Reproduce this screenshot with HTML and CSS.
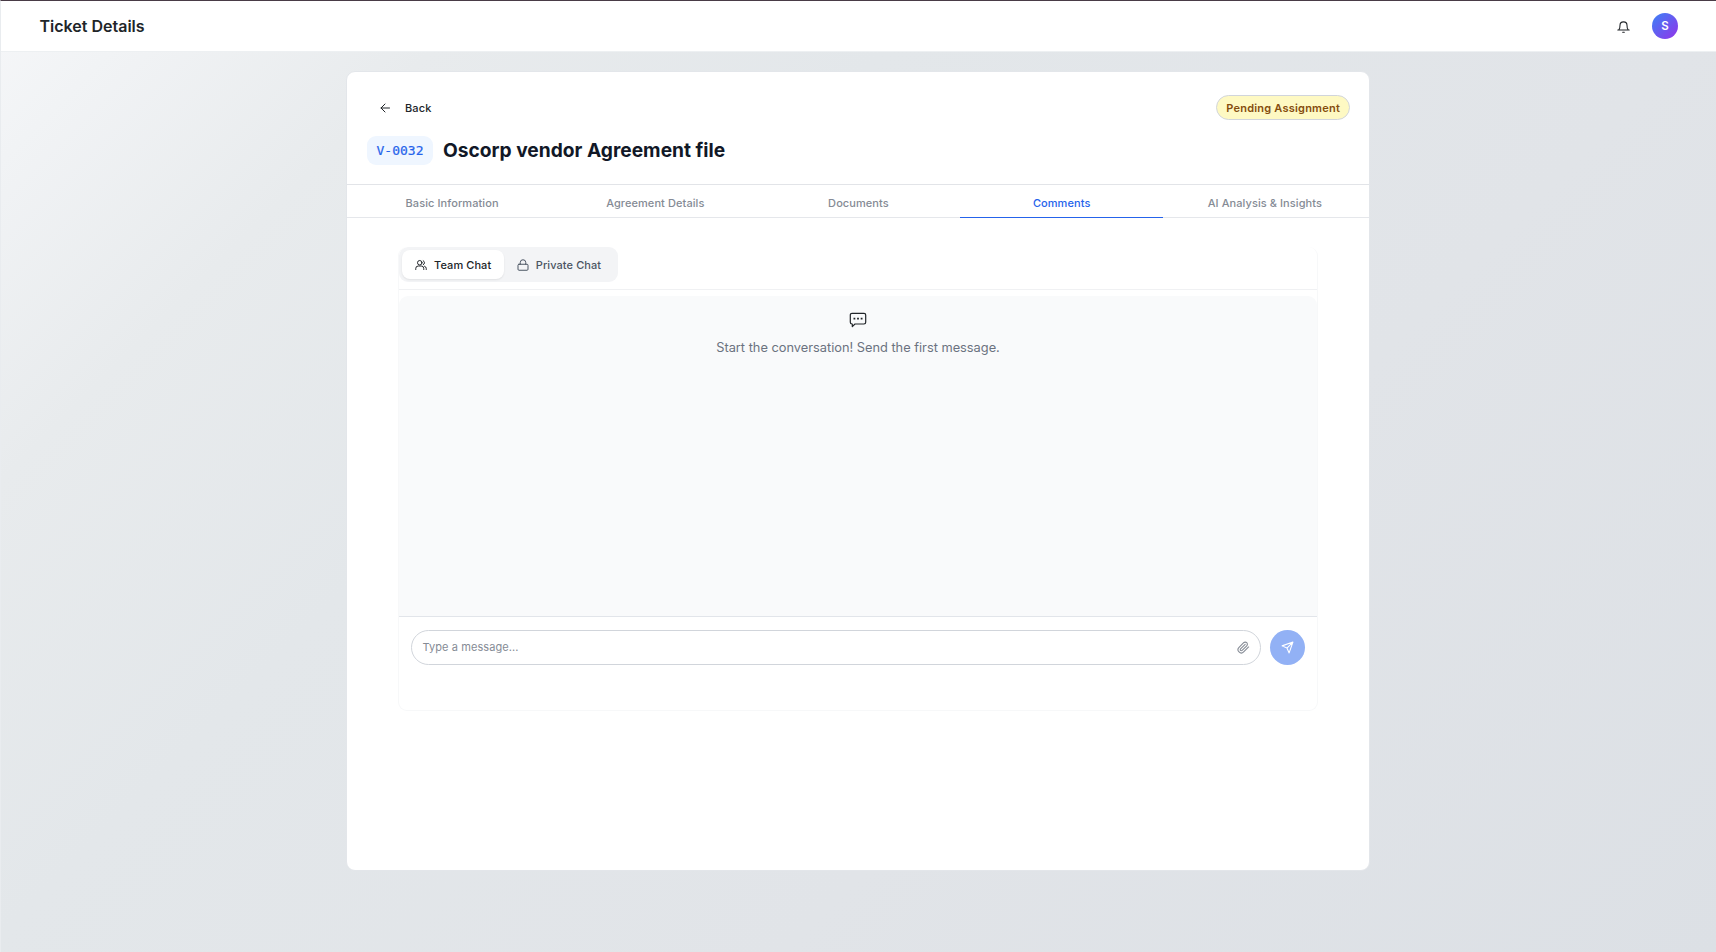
FILE: index.html
```html
<!DOCTYPE html>
<html lang="en">
<head>
<meta charset="utf-8">
<title>Ticket Details</title>
<link rel="stylesheet" href="styles.css">
</head>
<body>
<div class="app">
  <header class="topbar">
    <h1 class="page-title">Ticket Details</h1>
    <div class="actions">
      <svg class="bell" viewBox="0 0 24 24"><path d="M1.500 18.500h21M3.500 18c1.500-1.500 2-3 2-8a6.500 6.500 0 0 1 13 0c0 5 .5 6.500 2 8M10.500 22.500h3"/></svg>
      <div class="avatar">S</div>
    </div>
  </header>
  <main class="card">
    <div class="card-head">
      <div class="head-row">
        <a class="back"><svg viewBox="0 0 24 24"><path d="M21 12H4M12 4l-8 8 8 8"/></svg><span>Back</span></a>
        <span class="status">Pending Assignment</span>
      </div>
      <div class="title-row">
        <span class="ticket-id">V-0032</span>
        <h2 class="ticket-title">Oscorp vendor Agreement file</h2>
      </div>
    </div>
    <nav class="tabs">
      <a class="tab">Basic Information</a>
      <a class="tab">Agreement Details</a>
      <a class="tab">Documents</a>
      <a class="tab active">Comments</a>
      <a class="tab">AI Analysis &amp; Insights</a>
    </nav>
    <section class="chat">
      <div class="chat-head">
        <div class="switch">
          <button class="option selected"><svg viewBox="0 0 24 24"><circle cx="9.500" cy="7.500" r="4.500"/><path d="M1.500 21v-2a5 5 0 0 1 5-5h6a5 5 0 0 1 5 5v2M16.500 3.500a4.500 4.500 0 0 1 0 8M22.500 21v-2a5 5 0 0 0-3.500-4.700"/></svg>Team Chat</button>
          <button class="option"><svg viewBox="0 0 24 24"><rect x="2" y="10.500" width="20" height="12" rx="2"/><path d="M6.500 10.500V7a5.500 5.500 0 0 1 11 0v3.500"/></svg>Private Chat</button>
        </div>
      </div>
      <div class="messages">
        <svg class="bubble" viewBox="0 0 18 16"><path d="M3 1.300h12a1.700 1.700 0 0 1 1.700 1.700v7.300a1.700 1.700 0 0 1-1.700 1.700H6l-2.700 2.600V12H3a1.700 1.700 0 0 1-1.700-1.700V3A1.700 1.700 0 0 1 3 1.300Z"/><path class="dots" d="M4.500 5.800h1.800v1.700H4.500zM8.100 5.800h1.800v1.700H8.100zM11.700 5.800h1.800v1.700h-1.800z"/></svg>
        <p class="empty">Start the conversation! Send the first message.</p>
      </div>
      <div class="composer">
        <div class="field">
          <span>Type a message...</span>
          <svg viewBox="0 0 24 24"><path d="m21.440 11.050-9.190 9.190a6 6 0 0 1-8.490-8.490l8.570-8.570A4 4 0 1 1 18 8.840l-8.590 8.570a2 2 0 0 1-2.830-2.830l8.490-8.480"/></svg>
        </div>
        <div class="send"><svg viewBox="0 0 24 24"><path d="M22 2 15 22l-4-9-9-4ZM22 2 11 13"/></svg></div>
      </div>
    </section>
  </main>
</div>
</body>
</html>
```
FILE: styles.css
```css
* { box-sizing: border-box; }
body { margin: 0; font-family: Inter, sans-serif; color: #212529; }
svg { fill: none; stroke: currentColor; stroke-width: 2; stroke-linecap: round; stroke-linejoin: round; flex: none; }
h1, h2, p { margin: 0; }
.app { height: 952px; border-top: 1px solid #493b46; border-left: 1px solid #e9ecef; background: linear-gradient(135deg, #f6f7f9 0%, #f1f3f5 6%, #e8ebed 18%, #e3e7ea 35%, #e1e4e8 65%, #dce0e5 100%); overflow: hidden; }
.topbar { height: 51px; padding: 0 38px 0 38.500px; display: flex; align-items: center; justify-content: space-between; background: #fff; border-bottom: 1px solid #edf0f2; }
.page-title { font-size: 16px; font-weight: 600; line-height: 24px; }
.actions { display: flex; align-items: center; gap: 22px; }
.bell { width: 13px; height: 13px; }
.avatar { width: 26px; height: 26px; border-radius: 50%; background: linear-gradient(135deg, #3b82f6, #9333ea); color: #fff; font-size: 11.500px; font-weight: 600; display: flex; align-items: center; justify-content: center; }
.card { width: 1024px; height: 800px; margin: 19px 0 0 345px; background: #fff; border: 1px solid #e3e6ea; border-radius: 9px; overflow: hidden; }
.card-head { height: 113px; padding: 22px 19px 0 20px; border-bottom: 1px solid #e2e4e8; }
.head-row { height: 26px; display: flex; align-items: center; justify-content: space-between; }
.back { display: flex; align-items: center; gap: 14px; padding: 2px 0 0 12px; font-size: 11px; letter-spacing: 0.150px; font-weight: 500; }
.back svg { width: 12px; height: 12px; }
.status { height: 25px; padding: 0 9px; border: 1px solid #d1d5db; border-radius: 13px; background: #fef9c3; color: #854d0e; font-size: 11px; letter-spacing: 0.210px; font-weight: 600; line-height: 25px; }
.title-row { display: flex; align-items: center; gap: 10px; margin-top: 16px; }
.ticket-id { height: 29px; padding: 0 9.500px; border-radius: 9px; background: #eff6ff; color: #2563eb; font: 13px/29px "DejaVu Sans Mono", monospace; -webkit-text-stroke: 0.200px #2563eb; }
.ticket-title { font-size: 19.200px; line-height: 29px; font-weight: 700; color: #111827; }
.tabs { height: 33px; display: grid; grid-template-columns: repeat(5, 203.200px); padding-left: 3px; border-bottom: 1px solid #e5e7eb; }
.tab { height: 33px; padding: 1px 0 0 1px; text-align: center; font-size: 11px; letter-spacing: 0.080px; font-weight: 500; line-height: 34px; color: #858b95; }
.active { color: #2563eb; border-bottom: 1px solid #2563eb; }
.chat { width: 920px; height: 464px; margin: 29px 0 0 51px; border: 1px solid #f7f8f9; border-top: 0; border-radius: 9px; overflow: hidden; }
.chat-head { height: 43px; border-bottom: 1px solid #f0f1f3; }
.switch { width: 219px; height: 35px; padding: 3px; border-radius: 9px; background: #f3f4f6; display: flex; }
.option { height: 29px; border: 0; border-radius: 8px; background: none; display: flex; align-items: center; gap: 7px; padding: 0 12.500px 0 13px; font: 500 11px Inter, sans-serif; letter-spacing: 0.080px; color: #4b5563; white-space: nowrap; }
.option svg { width: 12px; height: 12px; }
.selected { color: #212529; background: #fff; box-shadow: 0 1px 2px rgba(0,0,0,.08); }
.messages { height: 321px; margin-top: 6px; padding-top: 16px; border-radius: 9px 9px 0 0; background: #f9fafb; border-bottom: 1px solid #e2e5ea; display: flex; flex-direction: column; align-items: center; }
.bubble { width: 18px; height: 16px; stroke-width: 1.200; }
.dots { fill: currentColor; stroke: none; }
.empty { margin-top: 10px; font-size: 12.800px; line-height: 20px; color: #6b7280; }
.composer { display: flex; gap: 9px; padding: 13px 12px; }
.field { width: 850px; height: 35px; border: 1px solid #d1d5db; border-radius: 18px; display: flex; align-items: center; justify-content: space-between; padding: 0 10.500px 1px 10.500px; font-size: 11px; letter-spacing: 0.080px; color: #858b95; }
.field svg { width: 13px; height: 13px; }
.send { width: 35px; height: 35px; border-radius: 50%; background: #92b1f5; color: #fff; display: flex; align-items: center; justify-content: center; }
.send svg { width: 13px; height: 13px; }
```
